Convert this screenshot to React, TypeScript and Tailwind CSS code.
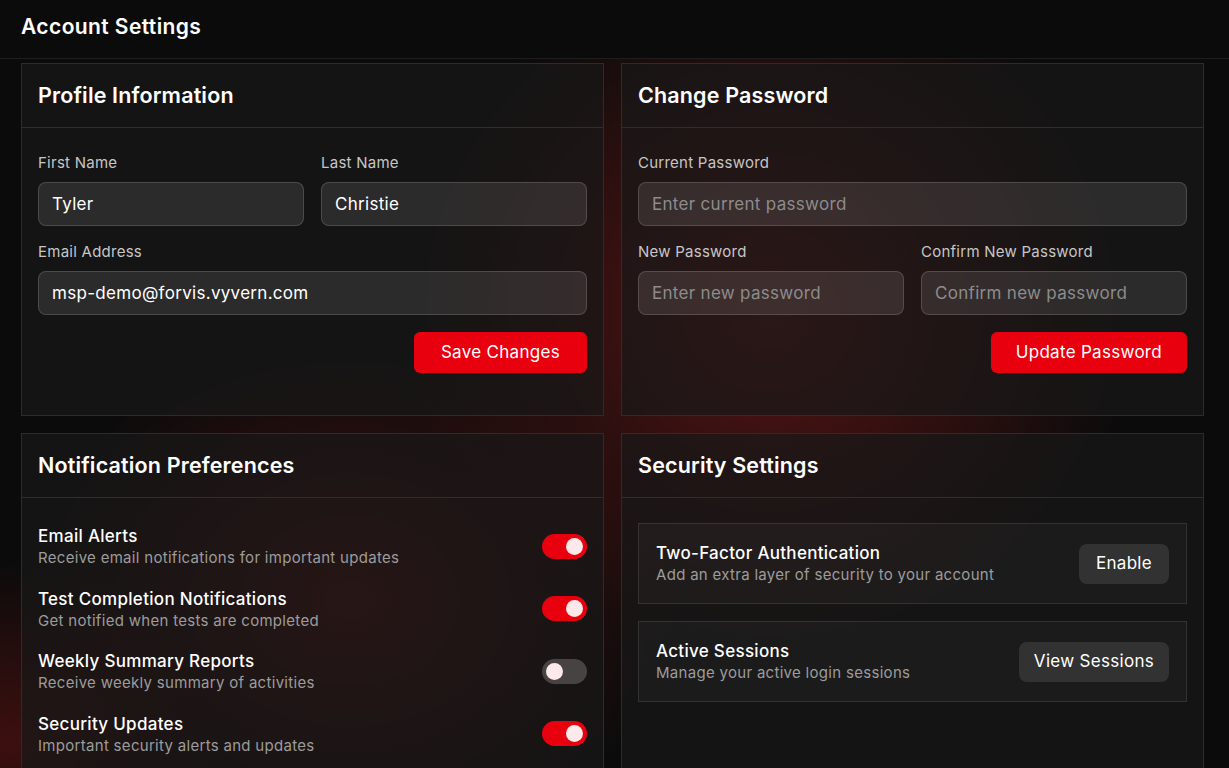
import React from "react";

const font = { fontFamily: "Inter, 'Noto Sans', sans-serif" };

function Card({ title, children, className = "" }: { title: string; children: React.ReactNode; className?: string }) {
  return (
    <section className={"border border-[#2c2c2c] bg-[#181818]/70 " + className}>
      <div className="h-[64px] border-b border-[#2e2e2e] px-4 flex items-center">
        <h2 className="text-[21.5px] font-semibold text-white tracking-[0.15px]">{title}</h2>
      </div>
      {children}
    </section>
  );
}

function Field({ label, value, placeholder }: { label: string; value?: string; placeholder?: string }) {
  return (
    <div className="flex flex-col">
      <label className="text-[15px] leading-[20px] text-[#c6c6c6] mb-[9px] tracking-[0.25px]">{label}</label>
      <input
        readOnly
        defaultValue={value}
        placeholder={placeholder}
        className="h-[44px] rounded-lg border border-white/15 bg-white/10 px-[13px] text-[17px] tracking-[0.3px] text-white placeholder:text-[#8c8c8c] outline-none"
        style={font}
      />
    </div>
  );
}

function Toggle({ on }: { on: boolean }) {
  return (
    <div
      className={
        "w-[45px] h-[25px] rounded-full flex items-center px-[4px] shrink-0 -mt-[2px] " +
        (on ? "bg-[#e8000f] justify-end" : "bg-white/20 justify-start")
      }
    >
      <div className="w-[17px] h-[17px] rounded-full bg-[#fde8ea]" />
    </div>
  );
}

const notifications = [
  { t: "Email Alerts", d: "Receive email notifications for important updates", on: true },
  { t: "Test Completion Notifications", d: "Get notified when tests are completed", on: true },
  { t: "Weekly Summary Reports", d: "Receive weekly summary of activities", on: false },
  { t: "Security Updates", d: "Important security alerts and updates", on: true },
];

export default function App() {
  return (
    <div className="relative min-h-screen h-[768px] overflow-hidden bg-[#0b0b0b] text-white" style={font}>
      {/* decorative background glows */}
      <div className="pointer-events-none absolute left-[400px] top-[-40px] w-[740px] h-[700px] bg-[radial-gradient(closest-side,rgba(135,26,26,0.62),rgba(135,26,26,0)_100%)]" />
      <div className="pointer-events-none absolute left-[20px] top-[340px] w-[660px] h-[520px] bg-[radial-gradient(closest-side,rgba(120,22,22,0.58),rgba(120,22,22,0)_100%)]" />
      <div className="pointer-events-none absolute left-[-200px] top-[560px] w-[420px] h-[360px] bg-[radial-gradient(closest-side,rgba(120,20,20,0.45),rgba(120,20,20,0)_100%)]" />

      <div className="relative">
        <header className="h-[59px] border-b border-[#1e1e1e] bg-[#0b0b0b] px-[21px] flex items-center">
          <h1 className="text-[21px] font-semibold tracking-[0.4px] -mt-[4px]">Account Settings</h1>
        </header>

        <main className="pl-[21px] pt-[4px] grid grid-cols-[583px_583px] gap-x-[17px] gap-y-[17px]">
          <Card title="Profile Information">
            <div className="px-4 pt-[25px] pb-[42px] flex flex-col gap-4">
              <div className="grid grid-cols-2 gap-[17px]">
                <Field label="First Name" value="Tyler" />
                <Field label="Last Name" value="Christie" />
              </div>
              <Field label="Email Address" value="msp-demo@forvis.vyvern.com" />
              <div className="flex justify-end pt-[1px]">
                <button className="h-[41px] px-[27px] rounded-md bg-[#e8000f] text-[17px] tracking-[0.3px] text-white">Save Changes</button>
              </div>
            </div>
          </Card>

          <Card title="Change Password">
            <div className="px-4 pt-[25px] pb-[42px] flex flex-col gap-4">
              <Field label="Current Password" placeholder="Enter current password" />
              <div className="grid grid-cols-2 gap-[17px]">
                <Field label="New Password" placeholder="Enter new password" />
                <Field label="Confirm New Password" placeholder="Confirm new password" />
              </div>
              <div className="flex justify-end pt-[1px]">
                <button className="h-[41px] px-[25px] rounded-md bg-[#e8000f] text-[17px] tracking-[0.3px] text-white">Update Password</button>
              </div>
            </div>
          </Card>

          <Card title="Notification Preferences" className="h-[400px]">
            <div className="px-4 pt-[27px] flex flex-col gap-[18.5px]">
              {notifications.map((n) => (
                <div key={n.t} className="flex items-center justify-between">
                  <div className="flex flex-col">
                    <span className="text-[17px] leading-[22px] font-medium text-white tracking-[0.3px]">{n.t}</span>
                    <span className="text-[15px] leading-[22px] text-[#9c9c9c] tracking-[0.3px]">{n.d}</span>
                  </div>
                  <Toggle on={n.on} />
                </div>
              ))}
            </div>
          </Card>

          <Card title="Security Settings" className="h-[400px]">
            <div className="px-4 pt-[25px] flex flex-col gap-[17px]">
              <div className="border border-white/10 bg-white/[0.03] px-[17px] py-[17.5px] flex items-center justify-between">
                <div className="flex flex-col">
                  <span className="text-[17px] leading-[22px] font-medium text-white tracking-[0.3px]">Two-Factor Authentication</span>
                  <span className="text-[15px] leading-[22px] text-[#9c9c9c] tracking-[0.3px]">Add an extra layer of security to your account</span>
                </div>
                <button className="h-[40px] px-[17px] rounded-lg bg-white/10 text-[17px] tracking-[0.3px] text-white">Enable</button>
              </div>
              <div className="border border-white/10 bg-white/[0.03] px-[17px] py-[17.5px] flex items-center justify-between">
                <div className="flex flex-col">
                  <span className="text-[17px] leading-[22px] font-medium text-white tracking-[0.3px]">Active Sessions</span>
                  <span className="text-[15px] leading-[22px] text-[#9c9c9c] tracking-[0.3px]">Manage your active login sessions</span>
                </div>
                <button className="h-[40px] px-[15px] rounded-lg bg-white/10 text-[17px] tracking-[0.3px] text-white">View Sessions</button>
              </div>
            </div>
          </Card>
        </main>
      </div>
    </div>
  );
}
